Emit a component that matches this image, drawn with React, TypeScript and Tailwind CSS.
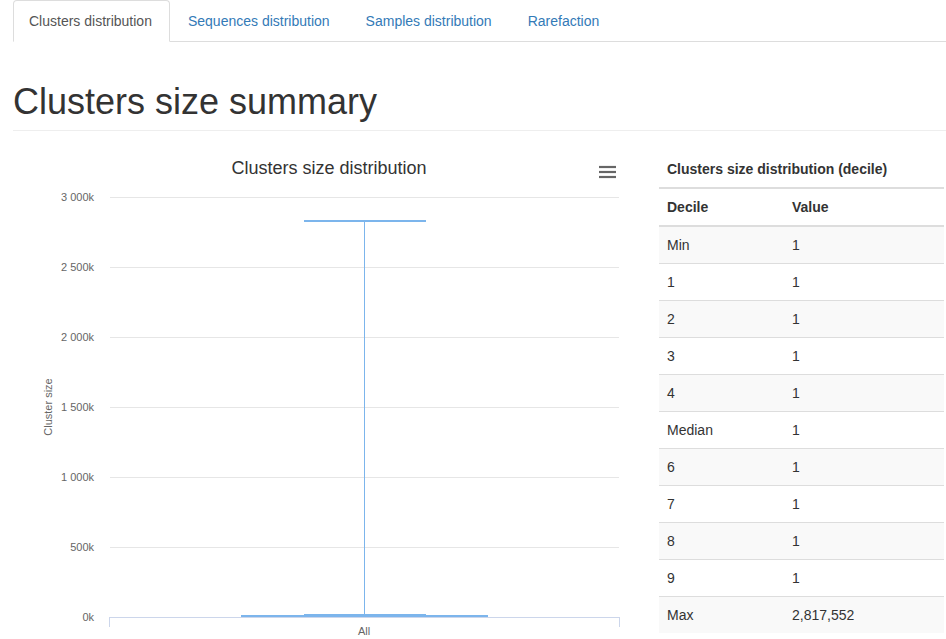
import React from 'react';

const tabs = ['Clusters distribution', 'Sequences distribution', 'Samples distribution', 'Rarefaction'];

const deciles: [string, string][] = [
  ['Min', '1'],
  ['1', '1'],
  ['2', '1'],
  ['3', '1'],
  ['4', '1'],
  ['Median', '1'],
  ['6', '1'],
  ['7', '1'],
  ['8', '1'],
  ['9', '1'],
  ['Max', '2,817,552'],
];

const yTicks = ['3 000k', '2 500k', '2 000k', '1 500k', '1 000k', '500k', '0k'];

const Chart: React.FC = () => (
  <svg width={617} height={488} className="block" style={{ fontFamily: '"Liberation Sans", Arial, sans-serif' }}>
    <text x={316} y={23} textAnchor="middle" fontSize={18} fill="#333">
      Clusters size distribution
    </text>
    <g stroke="#666" strokeWidth={2.2}>
      <line x1={586} x2={603} y1={16} y2={16} />
      <line x1={586} x2={603} y1={21} y2={21} />
      <line x1={586} x2={603} y1={26} y2={26} />
    </g>
    {yTicks.map((t, i) => {
      const y = 46 + i * 70;
      return (
        <g key={t}>
          {i < yTicks.length - 1 && <line x1={97} x2={606} y1={y + 0.5} y2={y + 0.5} stroke="#e6e6e6" />}
          <text x={81} y={y + 4} textAnchor="end" fontSize={11} fill="#666">
            {t}
          </text>
        </g>
      );
    })}
    <text x={39} y={256} textAnchor="middle" fontSize={11} fill="#666" transform="rotate(-90 39 256)">
      Cluster size
    </text>
    <line x1={96} x2={606} y1={466.5} y2={466.5} stroke="#ccd6eb" />
    <line x1={96.5} x2={96.5} y1={466} y2={476} stroke="#ccd6eb" />
    <line x1={606.5} x2={606.5} y1={466} y2={476} stroke="#ccd6eb" />
    <text x={351} y={484} textAnchor="middle" fontSize={11} fill="#666">
      All
    </text>
    <g stroke="#7cb5ec">
      <line x1={351.5} x2={351.5} y1={70} y2={465} />
      <line x1={291} x2={413} y1={70} y2={70} strokeWidth={2} />
      <rect x={228.5} y={464.5} width={246} height={1} fill="#7cb5ec" />
      <line x1={291} x2={413} y1={464} y2={464} strokeWidth={2} />
    </g>
  </svg>
);

export default function App() {
  return (
    <div className="w-[946px] h-[639px] overflow-hidden bg-white text-[14px] leading-[20px] text-[#333] font-['Liberation_Sans',Arial,sans-serif]">
      <ul className="ml-[13px] flex border-b border-[#ddd]">
        {tabs.map((t, i) => (
          <li key={t} className="-mb-px mr-[2px]">
            <a
              href="#"
              className={
                i === 0
                  ? 'block pl-[15px] pr-[17px] py-[10px] rounded-t-[4px] border border-[#ddd] border-b-transparent bg-white text-[#555]'
                  : 'block pl-[15px] pr-[17px] py-[10px] rounded-t-[4px] border border-transparent text-[#337ab7]'
              }
            >
              {t}
            </a>
          </li>
        ))}
      </ul>
      <div className="ml-[13px] mt-[40px] pb-[8px] border-b border-[#eee]">
        <h1 className="text-[36px] leading-[1.1] font-medium text-[#333]">Clusters size summary</h1>
      </div>
      <div className="mt-[20px] ml-[13px] flex">
        <div className="w-[617px] shrink-0">
          <Chart />
        </div>
        <div className="ml-[29px] w-[285px] shrink-0">
          <table className="w-full border-collapse">
            <thead>
              <tr>
                <th colSpan={2} className="p-[8px] text-left font-bold border-b-2 border-[#ddd]">
                  Clusters size distribution (decile)
                </th>
              </tr>
              <tr>
                <th className="w-[125px] p-[8px] text-left font-bold border-b-2 border-[#ddd]">Decile</th>
                <th className="p-[8px] text-left font-bold border-b-2 border-[#ddd]">Value</th>
              </tr>
            </thead>
            <tbody>
              {deciles.map(([d, v], i) => (
                <tr key={d} className={i % 2 === 0 ? 'bg-[#f9f9f9]' : 'bg-white'}>
                  <td className="p-[8px] border-t border-[#ddd]">{d}</td>
                  <td className="p-[8px] border-t border-[#ddd]">{v}</td>
                </tr>
              ))}
            </tbody>
          </table>
        </div>
      </div>
    </div>
  );
}
